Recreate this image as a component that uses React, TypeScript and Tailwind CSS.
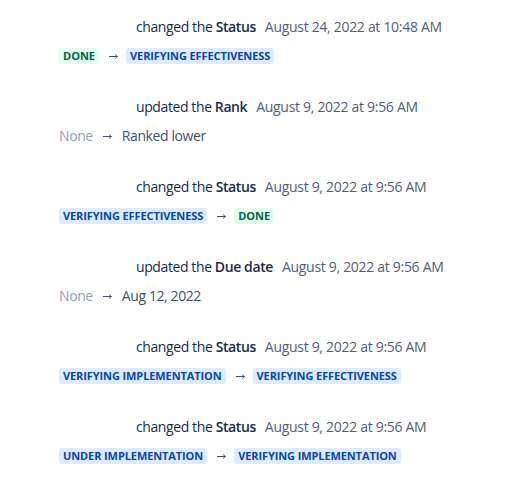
type Val = { kind: "done" | "blue" | "none" | "text"; label: string };

type Entry = { verb: string; field: string; date: string; from: Val; to: Val };

const entries: Entry[] = [
  {
    verb: "changed the",
    field: "Status",
    date: "August 24, 2022 at 10:48 AM",
    from: { kind: "done", label: "DONE" },
    to: { kind: "blue", label: "VERIFYING EFFECTIVENESS" },
  },
  {
    verb: "updated the",
    field: "Rank",
    date: "August 9, 2022 at 9:56 AM",
    from: { kind: "none", label: "None" },
    to: { kind: "text", label: "Ranked lower" },
  },
  {
    verb: "changed the",
    field: "Status",
    date: "August 9, 2022 at 9:56 AM",
    from: { kind: "blue", label: "VERIFYING EFFECTIVENESS" },
    to: { kind: "done", label: "DONE" },
  },
  {
    verb: "updated the",
    field: "Due date",
    date: "August 9, 2022 at 9:56 AM",
    from: { kind: "none", label: "None" },
    to: { kind: "text", label: "Aug 12, 2022" },
  },
  {
    verb: "changed the",
    field: "Status",
    date: "August 9, 2022 at 9:56 AM",
    from: { kind: "blue", label: "VERIFYING IMPLEMENTATION" },
    to: { kind: "blue", label: "VERIFYING EFFECTIVENESS" },
  },
  {
    verb: "changed the",
    field: "Status",
    date: "August 9, 2022 at 9:56 AM",
    from: { kind: "blue", label: "UNDER IMPLEMENTATION" },
    to: { kind: "blue", label: "VERIFYING IMPLEMENTATION" },
  },
];

function Value({ v }: { v: Val }) {
  if (v.kind === "done")
    return (
      <span className="inline-flex h-4 items-center rounded-[3px] bg-[#e3fcef] px-1 text-[11px] font-bold leading-4 tracking-normal text-[#006644]">
        {v.label}
      </span>
    );
  if (v.kind === "blue")
    return (
      <span className="inline-flex h-4 items-center rounded-[3px] bg-[#deebff] px-1 text-[11px] font-bold leading-4 tracking-[-0.1px] text-[#0747a6]">
        {v.label}
      </span>
    );
  if (v.kind === "none") return <span className="text-[#97a0af]">{v.label}</span>;
  return <span className="ml-0.5 text-[#42526e]">{v.label}</span>;
}

function Arrow() {
  return (
    <svg width="9" height="8" viewBox="0 0 9 8" className="ml-[10px] mr-2 shrink-0" fill="none" stroke="#42526e" strokeWidth="1">
      <path d="M0 4.5h8.5" />
      <path d="M6 2.5l2.5 2-2.5 2" strokeWidth="0.9" />
    </svg>
  );
}

export default function App() {
  return (
    <div
      className="min-h-screen bg-white pt-[17px] text-sm tracking-[-0.4px] text-[#172b4d]"
      style={{ fontFamily: '"Open Sans", "Noto Sans", sans-serif' }}
    >
      <div className="flex flex-col gap-[31px]">
        {entries.map((e, i) => (
          <div key={i} className="flex flex-col gap-[9px]">
            <div className="flex h-5 items-center pl-[136px] leading-5">
              <span>{e.verb}&nbsp;</span>
              <span className="font-semibold">{e.field}</span>
              <span className="ml-[9px] tracking-[-0.3px] text-[#505f79]">{e.date}</span>
            </div>
            <div className="flex h-5 items-center pl-[59px] leading-5">
              <Value v={e.from} />
              <Arrow />
              <Value v={e.to} />
            </div>
          </div>
        ))}
      </div>
    </div>
  );
}
